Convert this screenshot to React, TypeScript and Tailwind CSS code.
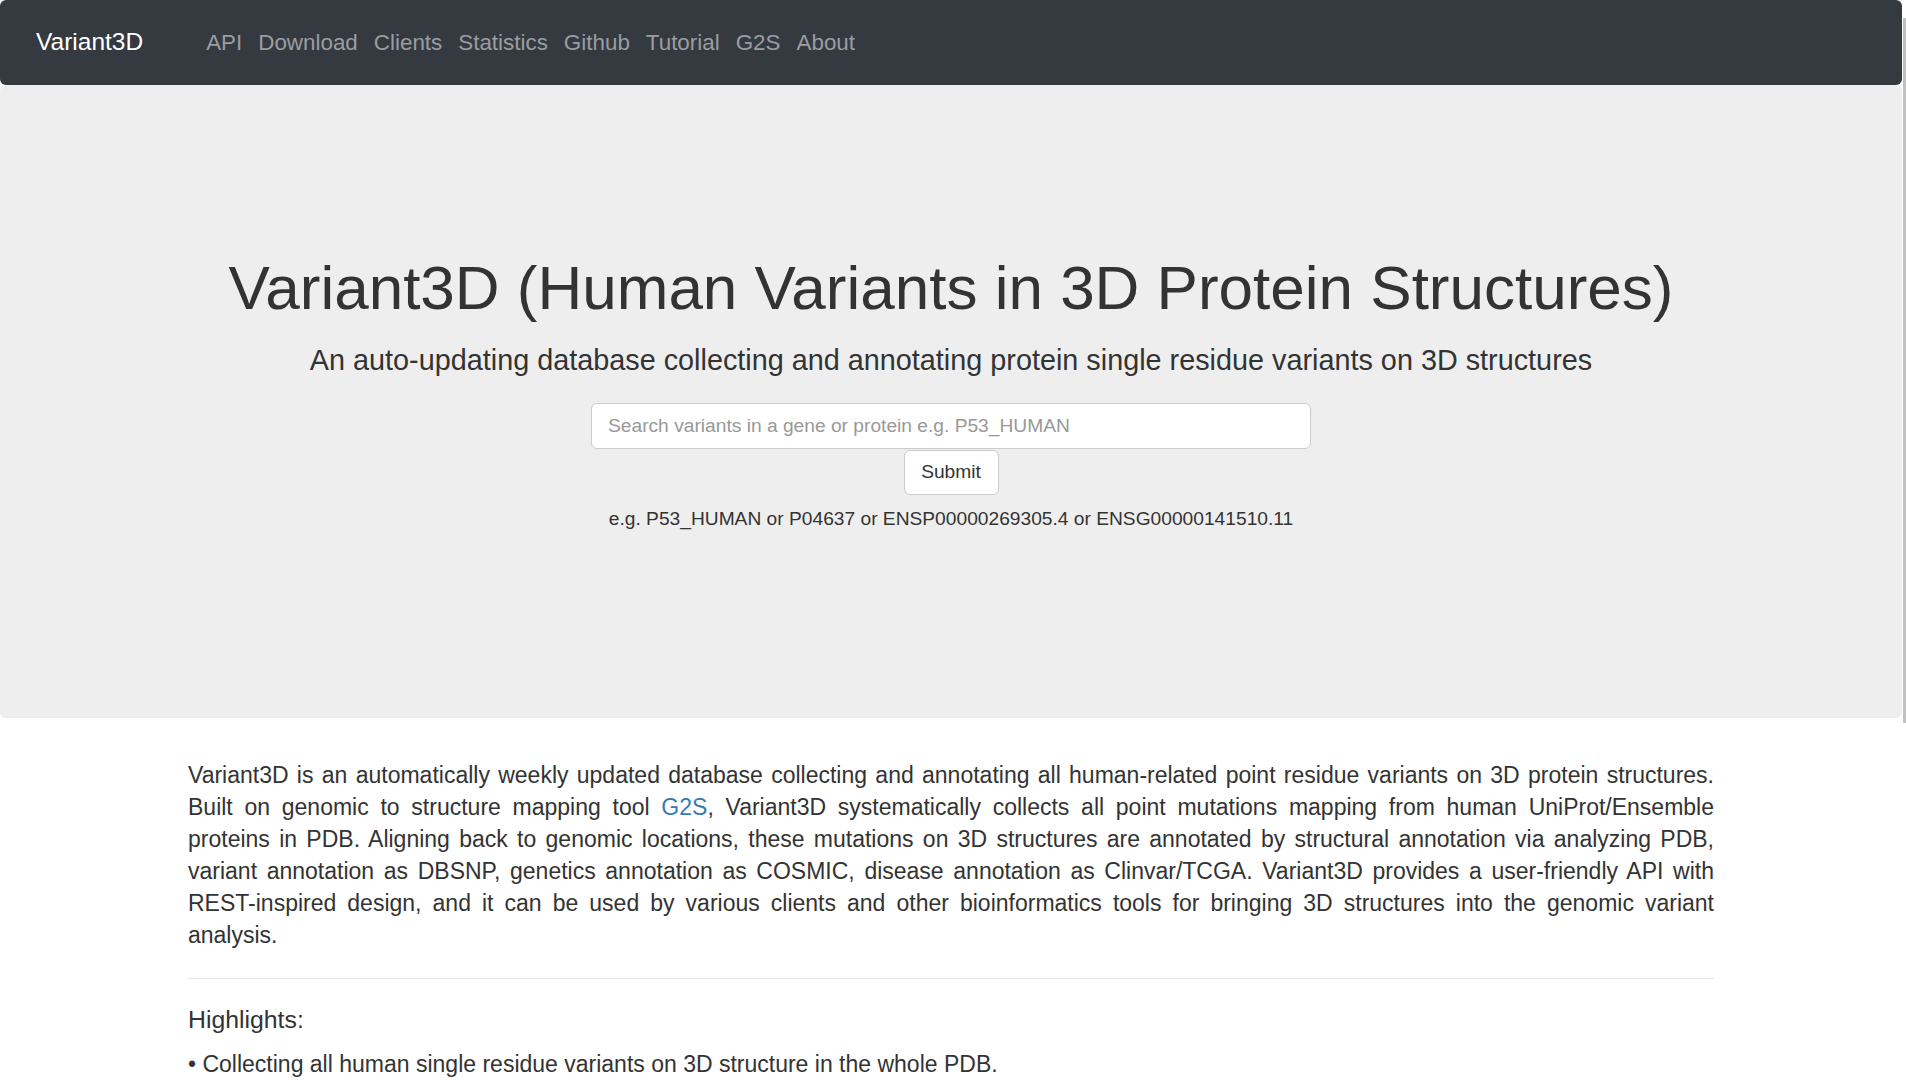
export default function App() {
  const links = ["API", "Download", "Clients", "Statistics", "Github", "Tutorial", "G2S", "About"];
  return (
    <div className="flex w-full h-[1080px] overflow-hidden bg-white font-['Liberation_Sans',Arial,sans-serif] text-[#333]">
      <div className="flex-1 min-w-0">
        <nav className="h-[85px] bg-[#343a40] rounded-[6px] flex items-center pl-[36px]">
          <span className="text-[24.5px] text-white">Variant3D</span>
          <div className="ml-[63px] flex gap-[16px] text-[22.4px] text-[#9a9da0]">
            {links.map((l) => (
              <a key={l} href="#" className="hover:text-white">
                {l}
              </a>
            ))}
          </div>
        </nav>
        <div className="h-[633px] bg-[#eeeeee] rounded-[6px] flex flex-col items-center pt-[169px]">
          <h1 className="text-[62px] leading-[68px] text-[#333] whitespace-nowrap">
            Variant3D (Human Variants in 3D Protein Structures)
          </h1>
          <p className="mt-[21px] text-[28.8px] leading-[35px] whitespace-nowrap">
            An auto-updating database collecting and annotating protein single residue variants on 3D structures
          </p>
          <input
            className="mt-[25px] w-[720px] h-[46px] bg-white border border-[#ccc] rounded-[6px] px-[16px] text-[19.2px] text-[#555] placeholder:text-[#999] outline-none"
            placeholder="Search variants in a gene or protein e.g. P53_HUMAN"
          />
          <button className="mt-[1px] w-[95px] h-[45px] bg-white border border-[#ccc] rounded-[6px] text-[19.2px] text-[#333]">
            Submit
          </button>
          <p className="mt-[10px] text-[19.2px] leading-[27px] whitespace-nowrap">
            e.g. P53_HUMAN or P04637 or ENSP00000269305.4 or ENSG00000141510.11
          </p>
        </div>
        <div className="w-[1526px] mx-auto pt-[41px]">
          <p className="text-[23px] leading-[32px] text-justify [text-align-last:justify]">
            Variant3D is an automatically weekly updated database collecting and annotating all human-related point
            residue variants on 3D protein structures.
            <br />
            Built on genomic to structure mapping tool{" "}
            <a href="#" className="text-[#337ab7]">
              G2S
            </a>
            , Variant3D systematically collects all point mutations mapping from human UniProt/Ensemble
            <br />
            proteins in PDB. Aligning back to genomic locations, these mutations on 3D structures are annotated by
            structural annotation via analyzing PDB,
            <br />
            variant annotation as DBSNP, genetics annotation as COSMIC, disease annotation as Clinvar/TCGA. Variant3D
            provides a user-friendly API with
            <br />
            REST-inspired design, and it can be used by various clients and other bioinformatics tools for bringing 3D
            structures into the genomic variant
            <br />
            analysis.
          </p>
          <div className="mt-[27px] border-t border-[#e5e5e5]" />
          <h4 className="mt-[25px] text-[24.8px] leading-[32px]">Highlights:</h4>
          <p className="mt-[12px] text-[23px] leading-[32px]">
            • Collecting all human single residue variants on 3D structure in the whole PDB.
          </p>
        </div>
      </div>
      <div className="w-[4px] flex flex-col bg-white">
        <div className="ml-auto w-[3px] mt-[18px] h-[705px] bg-[#c1c1c1]" />
      </div>
    </div>
  );
}
